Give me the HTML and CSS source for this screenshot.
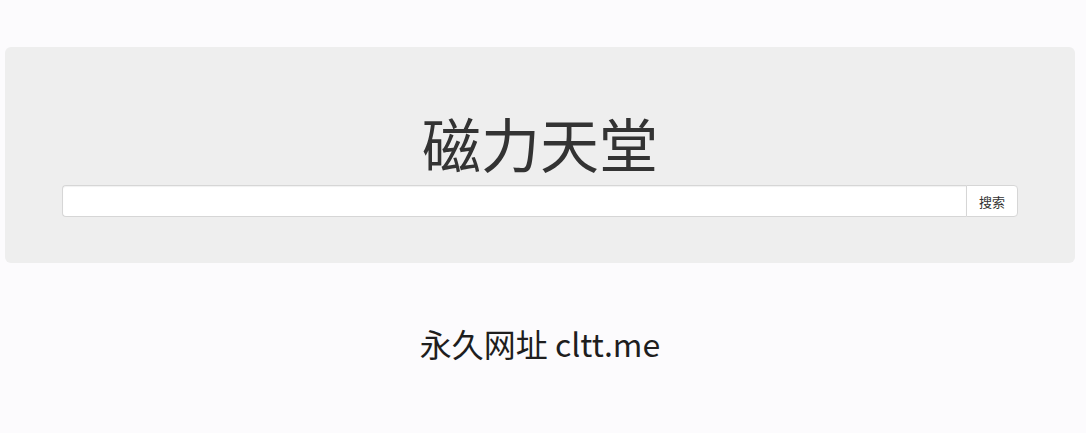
FILE: index.html
```html
<!DOCTYPE html>
<html lang="zh">
<head>
<meta charset="utf-8">
<link rel="stylesheet" href="styles.css">
</head>
<body>
<div class="page">
  <div class="jumbotron">
    <h1 class="title">磁力天堂</h1>
    <form class="search">
      <input class="search-input" type="text">
      <button class="search-btn" type="button">搜索</button>
    </form>
  </div>
  <p class="url">永久网址 cltt.me</p>
</div>
</body>
</html>
```

FILE: styles.css
```css
html, body {
  margin: 0;
  padding: 0;
  background: #fcfbfd;
}
body {
  font-family: "Noto Sans CJK SC", "Noto Sans", sans-serif;
  width: 1086px;
  height: 433px;
  overflow: hidden;
}
.page {
  padding: 47px 11px 0 5px;
}
.jumbotron {
  background: #eeeeee;
  border-radius: 6px;
  height: 216px;
  box-sizing: border-box;
  padding: 57px 57px 0 57px;
  display: flex;
  flex-direction: column;
  align-items: center;
}
.title {
  margin: 0 0 3px 0;
  font-size: 59px;
  font-weight: 400;
  line-height: 78px;
  color: #333333;
  letter-spacing: 0;
}
.search {
  display: flex;
  width: 100%;
  height: 32px;
  margin: 0;
}
.search-input {
  flex: 1;
  height: 32px;
  box-sizing: border-box;
  border: 1px solid #d6d6d6;
  border-right: none;
  border-radius: 4px 0 0 4px;
  background: #ffffff;
  margin: 0;
  box-shadow: inset 0 1px 1px rgba(0,0,0,0.06);
}
.search-btn {
  width: 52px;
  height: 32px;
  box-sizing: border-box;
  border: 1px solid #d6d6d6;
  border-radius: 0 4px 4px 0;
  background: #ffffff;
  color: #333333;
  font-family: "Noto Sans CJK SC", sans-serif;
  font-size: 13px;
  padding: 0;
  margin: 0;
}
.url {
  margin: 60px 0 0 0;
  text-align: center;
  font-size: 32px;
  line-height: 40px;
  color: #1e1e1e;
  font-family: "Noto Sans CJK SC", "Noto Sans", sans-serif;
}
```
